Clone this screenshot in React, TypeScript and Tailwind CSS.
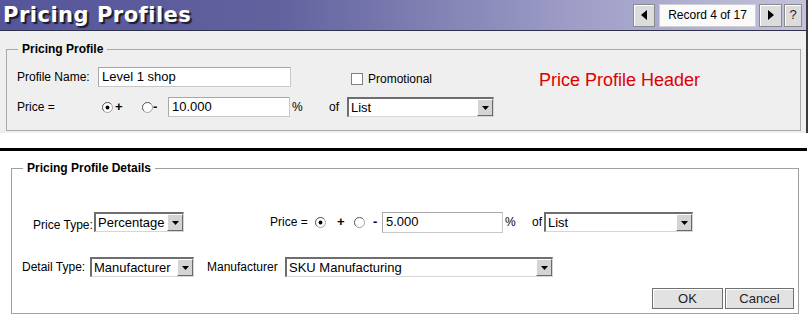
import React from "react";

const Arrow = ({ dir = "down" }: { dir?: "down" | "left" | "right" }) => {
  if (dir === "left")
    return (
      <svg width="6" height="10" viewBox="0 0 6 10">
        <path d="M6 0v10L0 5z" fill="#000" />
      </svg>
    );
  if (dir === "right")
    return (
      <svg width="6" height="10" viewBox="0 0 6 10">
        <path d="M0 0v10l6-5z" fill="#000" />
      </svg>
    );
  return (
    <svg width="7" height="4" viewBox="0 0 7 4">
      <path d="M0 0h7L3.5 4z" fill="#000" />
    </svg>
  );
};

const Select = ({ className, value }: { className: string; value: string }) => (
  <div
    className={`${className} h-[20px] flex bg-white border-t-2 border-l-2 border-b border-r border-t-[#6e6e6e] border-l-[#6e6e6e] border-b-[#d6d6d6] border-r-[#d6d6d6]`}
  >
    <span className="flex-1 pl-[2px] text-[13px] leading-[17px] whitespace-nowrap overflow-hidden">
      {value}
    </span>
    <span className="w-[16px] h-full flex items-center justify-center bg-[#d4d4d4] border border-t-white border-l-white border-r-[#6a6a6a] border-b-[#6a6a6a]">
      <Arrow />
    </span>
  </div>
);

const TextBox = ({ className, value }: { className: string; value: string }) => (
  <div
    className={`${className} bg-white border border-[#c8c8c8] border-t-[#a8a8a8] border-l-[#a8a8a8] pl-[3px] text-[13px] leading-[18px]`}
  >
    {value}
  </div>
);

const Radio = ({ checked }: { checked?: boolean }) => (
  <svg width="11" height="11" viewBox="0 0 11 11" className="shrink-0">
    <circle cx="5.5" cy="5.5" r="5" fill="#fff" stroke="#a0a0a0" />
    <path d="M1.9 9.1A5 5 0 0 1 9.1 1.9" stroke="#6a6a6a" fill="none" />
    {checked && <circle cx="5.5" cy="5.5" r="1.9" fill="#000" />}
  </svg>
);

const Sign = ({ children }: { children: React.ReactNode }) => (
  <span className="font-bold text-[13px] leading-none">{children}</span>
);

const HeadButton = ({ children, className }: { children: React.ReactNode; className: string }) => (
  <div
    className={`${className} h-[23px] flex items-center justify-center bg-[#dcdcdc] border border-[#8a8a8a] shadow-[inset_1px_1px_0_#fff]`}
  >
    {children}
  </div>
);

export default function App() {
  return (
    <div className="w-[809px] h-[325px] bg-white overflow-hidden font-['Liberation_Sans',Arial,sans-serif] text-[12px] text-black">
      {/* header panel */}
      <div className="w-[808px] border-r-2 border-[#3a3a3a]">
        <div className="h-[31px] flex items-center justify-between pl-[3px] pr-[4px] border-b border-[#30304a] bg-[linear-gradient(90deg,#55559a_0%,#62629f_35%,#9c9cc6_70%,#c2c2dc_100%)]">
          <span className="font-['DejaVu_Sans',sans-serif] font-bold text-[21px] tracking-[0.5px] leading-none text-white [text-shadow:2px_2px_1px_#1c1c2c]">
            Pricing Profiles
          </span>
          <div className="flex items-center">
            <HeadButton className="w-[22px]">
              <Arrow dir="left" />
            </HeadButton>
            <div className="ml-[4px] w-[97px] h-[23px] flex items-center justify-center bg-[#fafafa] border border-[#d0d0d0] text-[12px]">
              Record 4 of 17
            </div>
            <HeadButton className="ml-[3px] w-[23px]">
              <Arrow dir="right" />
            </HeadButton>
            <HeadButton className="ml-[2px] w-[18px]">
              <span className="text-[13px] text-[#222]">?</span>
            </HeadButton>
          </div>
        </div>

        <div className="h-[102px] bg-[#efefef] pt-[11px] pl-[6px]">
          <fieldset className="w-[795px] border border-[#a8a8a8] pl-[10px] pb-[13px]">
            <legend className="ml-[1px] px-[4px] font-bold text-[12px] leading-[14px]">Pricing Profile</legend>
            <div className="mt-[11px] h-[20px] flex items-center">
              <span className="w-[81px]">Profile Name:</span>
              <TextBox className="w-[193px] h-[20px]" value="Level 1 shop" />
              <div className="ml-[60px] w-[188px] mt-[4px] flex items-center">
                <span className="w-[12px] h-[12px] bg-white border border-[#808080]" />
                <span className="ml-[5px]">Promotional</span>
              </div>
              <span className="mt-[6px] text-[18px] leading-none text-[#e00000]">Price Profile Header</span>
            </div>
            <div className="mt-[10px] h-[20px] flex items-center">
              <span className="w-[85px]">Price =</span>
              <Radio checked />
              <span className="ml-[2px] w-[7px]">
                <Sign>+</Sign>
              </span>
              <span className="ml-[20px]">
                <Radio />
              </span>
              <span className="w-[6px]">
                <Sign>-</Sign>
              </span>
              <TextBox className="ml-[9px] w-[122px] h-[20px]" value="10.000" />
              <span className="ml-[2px] w-[10px]">%</span>
              <span className="ml-[27px] w-[18px]">of</span>
              <Select className="w-[147px]" value="List" />
            </div>
          </fieldset>
        </div>
      </div>

      <div className="h-[15px]" />
      <div className="w-[807px] h-[3px] bg-black" />

      <div className="pt-[10px] pl-[11px]">
        <fieldset className="w-[788px] border border-[#a0a0a0] pl-[10px] pr-[4px] pb-[4px]">
          <legend className="ml-[1px] px-[4px] font-bold text-[12px] leading-[14px]">Pricing Profile Details</legend>
          <div className="mt-[36px] h-[22px] flex items-center">
            <span className="ml-[11px] w-[61px] mt-[6px]">Price Type:</span>
            <Select className="w-[90px]" value="Percentage" />
            <span className="ml-[86px] w-[45px]">Price =</span>
            <Radio checked />
            <span className="ml-[11px] w-[7px]">
              <Sign>+</Sign>
            </span>
            <span className="ml-[10px]">
              <Radio />
            </span>
            <span className="ml-[8px] w-[5px]">
              <Sign>-</Sign>
            </span>
            <TextBox className="ml-[4px] w-[121px] h-[21px]" value="5.000" />
            <span className="ml-[2px] w-[10px]">%</span>
            <span className="ml-[17px] w-[12px]">of</span>
            <Select className="w-[149px]" value="List" />
          </div>
          <div className="mt-[24px] h-[20px] flex items-center">
            <span className="w-[68px]">Detail Type:</span>
            <Select className="w-[104px]" value="Manufacturer" />
            <span className="ml-[13px] w-[78px]">Manufacturer</span>
            <Select className="w-[268px]" value="SKU Manufacturing" />
          </div>
          <div className="mt-[11px] flex justify-end gap-[2px]">
            <button className="w-[71px] h-[21px] bg-[#e2e2e2] border border-[#707070] shadow-[inset_1px_1px_0_#fff] text-[13px] leading-none text-[#222]">
              OK
            </button>
            <button className="w-[69px] h-[21px] bg-[#e2e2e2] border border-[#707070] shadow-[inset_1px_1px_0_#fff] text-[13px] leading-none text-[#222]">
              Cancel
            </button>
          </div>
        </fieldset>
      </div>
    </div>
  );
}
